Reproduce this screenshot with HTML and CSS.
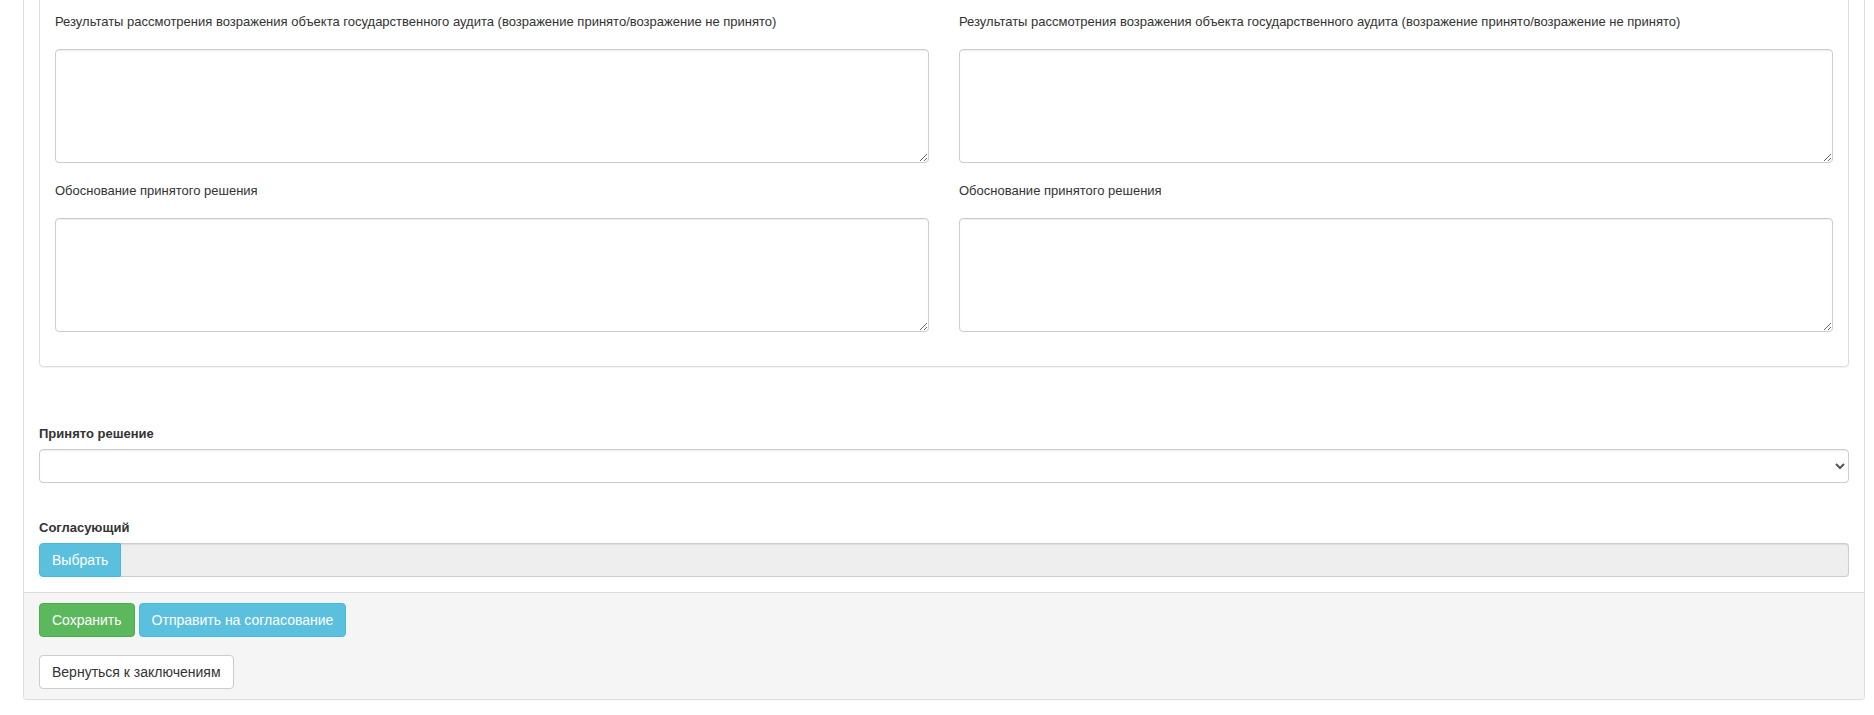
FILE: index.html
```html
<!DOCTYPE html>
<html lang="ru">
<head>
    <meta charset="UTF-8">
    <meta name="viewport" content="width=device-width, initial-scale=1.0">
    <title>Заключение</title>
    <link rel="stylesheet" href="styles.css">
</head>
<body>
    <div class="panel">
        <div class="panel-body">
            <div class="subpanel">
                <div class="row">
                    <div class="col">
                        <div class="field">
                            <label class="field-label">Результаты рассмотрения возражения объекта государственного аудита (возражение принято/возражение не принято)</label>
                            <textarea class="form-control" rows="5"></textarea>
                        </div>
                        <div class="field">
                            <label class="field-label">Обоснование принятого решения</label>
                            <textarea class="form-control" rows="5"></textarea>
                        </div>
                    </div>
                    <div class="col">
                        <div class="field">
                            <label class="field-label">Результаты рассмотрения возражения объекта государственного аудита (возражение принято/возражение не принято)</label>
                            <textarea class="form-control" rows="5"></textarea>
                        </div>
                        <div class="field">
                            <label class="field-label">Обоснование принятого решения</label>
                            <textarea class="form-control" rows="5"></textarea>
                        </div>
                    </div>
                </div>
            </div>

            <div class="form-group">
                <label class="control-label">Принято решение</label>
                <select class="form-control">
                    <option></option>
                </select>
            </div>

            <div class="form-group form-group-last">
                <label class="control-label">Согласующий</label>
                <div class="input-group">
                    <button type="button" class="btn btn-info btn-addon">Выбрать</button>
                    <input type="text" class="form-control" readonly>
                </div>
            </div>
        </div>

        <div class="panel-footer">
            <div class="btn-row">
                <button type="button" class="btn btn-success">Сохранить</button>
                <button type="button" class="btn btn-info">Отправить на согласование</button>
            </div>
            <button type="button" class="btn btn-default">Вернуться к заключениям</button>
        </div>
    </div>
</body>
</html>
```

FILE: styles.css
```css
body {
    margin: 0;
    font-family: "Liberation Sans", Arial, sans-serif;
    font-size: 14px;
    color: #333;
    background-color: #fff;
}
.panel {
    margin: -20px 9px 0 23px;
    border: 1px solid #ddd;
    border-radius: 4px;
    background-color: #fff;
    box-shadow: 0 1px 1px rgba(0, 0, 0, 0.05);
}
.panel-body {
    padding: 15px;
}
.subpanel {
    border: 1px solid #ddd;
    border-radius: 4px;
    padding: 15px;
    margin-bottom: 57px;
    box-shadow: 0 1px 1px rgba(0, 0, 0, 0.05);
}
.row {
    display: flex;
    margin: 0 -15px;
}
.col {
    flex: 1;
    padding: 0 15px;
    min-width: 0;
}
.field {
    margin-bottom: 18px;
}
.field:last-child {
    margin-bottom: 19px;
}
.field-label {
    display: block;
    font-size: 13px;
    line-height: 20px;
    margin-bottom: 17px;
}
.form-control {
    display: block;
    width: 100%;
    box-sizing: border-box;
    height: 34px;
    padding: 6px 12px;
    font-family: inherit;
    font-size: 14px;
    line-height: 20px;
    color: #555;
    background-color: #fff;
    border: 1px solid #ccc;
    border-radius: 4px;
    box-shadow: inset 0 1px 1px rgba(0, 0, 0, 0.075);
}
textarea.form-control {
    height: auto;
    resize: vertical;
}
.form-group {
    margin-bottom: 35px;
}
.form-group-last {
    margin-bottom: 0;
}
.control-label {
    display: block;
    font-size: 13px;
    font-weight: bold;
    line-height: 20px;
    margin-bottom: 5px;
}
.input-group {
    display: flex;
}
.input-group .form-control {
    flex: 1;
    background-color: #eee;
    border-left: none;
    border-radius: 0 4px 4px 0;
}
.btn {
    display: inline-block;
    padding: 6px 12px;
    font-family: inherit;
    font-size: 14px;
    line-height: 20px;
    border: 1px solid transparent;
    border-radius: 4px;
    cursor: pointer;
    white-space: nowrap;
}
.btn-addon {
    border-radius: 4px 0 0 4px;
}
.btn-success {
    color: #fff;
    background-color: #5cb85c;
    border-color: #4cae4c;
}
.btn-info {
    color: #fff;
    background-color: #5bc0de;
    border-color: #46b8da;
}
.btn-default {
    color: #333;
    background-color: #fff;
    border-color: #ccc;
}
.panel-footer {
    padding: 10px 15px;
    background-color: #f5f5f5;
    border-top: 1px solid #ddd;
    border-radius: 0 0 3px 3px;
}
.btn-row {
    display: flex;
    gap: 4px;
    margin-bottom: 18px;
}
```
